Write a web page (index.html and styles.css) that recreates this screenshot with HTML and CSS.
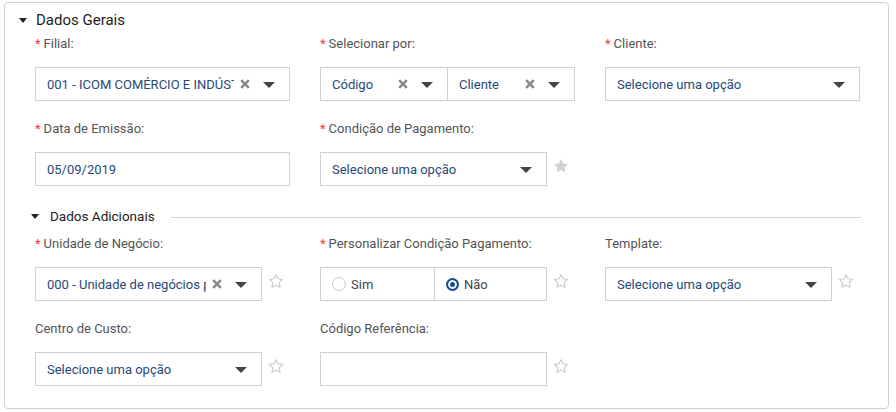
FILE: index.html
```html
<!DOCTYPE html>
<html lang="pt">
<head>
<meta charset="utf-8">
<link rel="stylesheet" href="styles.css">
</head>
<body>
<div class="panel">
  <div class="section-head">
    <svg class="tri" width="8" height="5" viewBox="0 0 8 5"><path d="M0 0h8L4 5z" fill="#222"/></svg>
    <span>Dados Gerais</span>
  </div>

  <div class="grid">
    <div class="field">
      <label class="lbl"><span class="req">*</span>Filial:</label>
      <div class="box select">
        <span class="val">001 - ICOM COMÉRCIO E INDÚSTRIA LTDA</span>
        <svg class="x" width="10" height="10" viewBox="0 0 10 10"><path d="M1.2 1.2L8.8 8.8M8.8 1.2L1.2 8.8" stroke="#8a8a8a" stroke-width="2.6"/></svg>
        <svg class="caret" width="12" height="6" viewBox="0 0 12 6"><path d="M0 0h12L6 6z" fill="#444"/></svg>
      </div>
    </div>
    <div class="field">
      <label class="lbl"><span class="req">*</span>Selecionar por:</label>
      <div class="split">
        <div class="box select half">
          <span class="val">Código</span>
          <svg class="x" width="10" height="10" viewBox="0 0 10 10"><path d="M1.2 1.2L8.8 8.8M8.8 1.2L1.2 8.8" stroke="#8a8a8a" stroke-width="2.6"/></svg>
          <svg class="caret" width="12" height="6" viewBox="0 0 12 6"><path d="M0 0h12L6 6z" fill="#444"/></svg>
        </div>
        <div class="box select half">
          <span class="val">Cliente</span>
          <svg class="x" width="10" height="10" viewBox="0 0 10 10"><path d="M1.2 1.2L8.8 8.8M8.8 1.2L1.2 8.8" stroke="#8a8a8a" stroke-width="2.6"/></svg>
          <svg class="caret" width="12" height="6" viewBox="0 0 12 6"><path d="M0 0h12L6 6z" fill="#444"/></svg>
        </div>
      </div>
    </div>
    <div class="field">
      <label class="lbl"><span class="req">*</span>Cliente:</label>
      <div class="box select">
        <span class="val">Selecione uma opção</span>
        <svg class="caret" width="12" height="6" viewBox="0 0 12 6"><path d="M0 0h12L6 6z" fill="#444"/></svg>
      </div>
    </div>

    <div class="field">
      <label class="lbl"><span class="req">*</span>Data de Emissão:</label>
      <div class="box input"><span class="val">05/09/2019</span></div>
    </div>
    <div class="field">
      <label class="lbl"><span class="req">*</span>Condição de Pagamento:</label>
      <div class="ctrl">
        <div class="box select narrow">
          <span class="val">Selecione uma opção</span>
          <svg class="caret" width="12" height="6" viewBox="0 0 12 6"><path d="M0 0h12L6 6z" fill="#444"/></svg>
        </div>
        <svg class="star" width="16" height="16" viewBox="0 0 24 24"><path d="M12 1.5l3.2 6.6 7.2 1-5.2 5.1 1.3 7.2L12 18l-6.5 3.4 1.3-7.2L1.6 9.1l7.2-1z" fill="#cfd2d6"/></svg>
      </div>
    </div>
  </div>

  <div class="sub-head">
    <svg class="tri" width="8" height="5" viewBox="0 0 8 5"><path d="M0 0h8L4 5z" fill="#222"/></svg>
    <span class="sub-title">Dados Adicionais</span>
    <span class="rule"></span>
  </div>

  <div class="grid">
    <div class="field">
      <label class="lbl"><span class="req">*</span>Unidade de Negócio:</label>
      <div class="ctrl">
        <div class="box select narrow">
          <span class="val">000 - Unidade de negócios padrão</span>
          <svg class="x" width="10" height="10" viewBox="0 0 10 10"><path d="M1.2 1.2L8.8 8.8M8.8 1.2L1.2 8.8" stroke="#8a8a8a" stroke-width="2.6"/></svg>
          <svg class="caret" width="12" height="6" viewBox="0 0 12 6"><path d="M0 0h12L6 6z" fill="#444"/></svg>
        </div>
        <svg class="star" width="16" height="16" viewBox="0 0 24 24"><path d="M12 2.5l3 6.2 6.8 1-4.9 4.8 1.2 6.8L12 18l-6.1 3.3 1.2-6.8-4.9-4.8 6.8-1z" fill="none" stroke="#c5c9ce" stroke-width="1.6" stroke-linejoin="round"/></svg>
      </div>
    </div>
    <div class="field">
      <label class="lbl"><span class="req">*</span>Personalizar Condição Pagamento:</label>
      <div class="ctrl">
        <div class="radios">
          <div class="box radio-opt"><span class="radio"></span><span class="rtext">Sim</span></div>
          <div class="box radio-opt"><span class="radio on"></span><span class="rtext">Não</span></div>
        </div>
        <svg class="star" width="16" height="16" viewBox="0 0 24 24"><path d="M12 2.5l3 6.2 6.8 1-4.9 4.8 1.2 6.8L12 18l-6.1 3.3 1.2-6.8-4.9-4.8 6.8-1z" fill="none" stroke="#c5c9ce" stroke-width="1.6" stroke-linejoin="round"/></svg>
      </div>
    </div>
    <div class="field">
      <label class="lbl">Template:</label>
      <div class="ctrl">
        <div class="box select narrow">
          <span class="val">Selecione uma opção</span>
          <svg class="caret" width="12" height="6" viewBox="0 0 12 6"><path d="M0 0h12L6 6z" fill="#444"/></svg>
        </div>
        <svg class="star" width="16" height="16" viewBox="0 0 24 24"><path d="M12 2.5l3 6.2 6.8 1-4.9 4.8 1.2 6.8L12 18l-6.1 3.3 1.2-6.8-4.9-4.8 6.8-1z" fill="none" stroke="#c5c9ce" stroke-width="1.6" stroke-linejoin="round"/></svg>
      </div>
    </div>

    <div class="field">
      <label class="lbl">Centro de Custo:</label>
      <div class="ctrl">
        <div class="box select narrow">
          <span class="val">Selecione uma opção</span>
          <svg class="caret" width="12" height="6" viewBox="0 0 12 6"><path d="M0 0h12L6 6z" fill="#444"/></svg>
        </div>
        <svg class="star" width="16" height="16" viewBox="0 0 24 24"><path d="M12 2.5l3 6.2 6.8 1-4.9 4.8 1.2 6.8L12 18l-6.1 3.3 1.2-6.8-4.9-4.8 6.8-1z" fill="none" stroke="#c5c9ce" stroke-width="1.6" stroke-linejoin="round"/></svg>
      </div>
    </div>
    <div class="field">
      <label class="lbl">Código Referência:</label>
      <div class="ctrl">
        <div class="box input narrow"></div>
        <svg class="star" width="16" height="16" viewBox="0 0 24 24"><path d="M12 2.5l3 6.2 6.8 1-4.9 4.8 1.2 6.8L12 18l-6.1 3.3 1.2-6.8-4.9-4.8 6.8-1z" fill="none" stroke="#c5c9ce" stroke-width="1.6" stroke-linejoin="round"/></svg>
      </div>
    </div>
  </div>
</div>
</body>
</html>
```

FILE: styles.css
```css
* { box-sizing: border-box; }

html, body {
  margin: 0;
  padding: 0;
  background: #fff;
}

body {
  font-family: Roboto, "Liberation Sans", Arial, sans-serif;
  font-size: 13px;
  color: #555;
}

.panel {
  margin: 2px 0 0 4px;
  width: 885px;
  height: 407px;
  border: 1px solid #cfd1d4;
  border-radius: 4px;
  padding: 6px 0 0 14px;
}

.section-head {
  display: flex;
  align-items: center;
  height: 22px;
  color: #222;
  font-size: 15px;
}

.section-head .tri {
  margin-right: 9px;
  margin-top: 1px;
}

.grid {
  display: grid;
  grid-template-columns: 255px 255px 255px;
  column-gap: 30px;
  row-gap: 20px;
  padding-left: 16px;
}

.section-head + .grid {
  margin-top: 5px;
}

.field {
  display: flex;
  flex-direction: column;
}

.lbl {
  display: block;
  height: 16px;
  line-height: 16px;
  margin-bottom: 15px;
  color: #545454;
  font-size: 13px;
}

.req {
  color: #ee3b3b;
  margin-right: 3px;
}

.box {
  height: 34px;
  border: 1px solid #ced1d8;
  background: #fff;
  display: flex;
  align-items: center;
}

.select, .input {
  padding: 0 14px 0 11px;
}

.val {
  flex: 1;
  min-width: 0;
  overflow: hidden;
  white-space: nowrap;
  text-overflow: clip;
  color: #27497a;
  font-size: 13px;
}

.x {
  flex: none;
  margin: 0 13px 0 6px;
}

.caret {
  flex: none;
  margin-top: 1px;
}

.split {
  display: flex;
}

.split .half {
  width: 128px;
  padding-right: 14px;
}

.split .half + .half {
  margin-left: -1px;
}

.ctrl {
  display: flex;
  align-items: flex-start;
}

.narrow {
  width: 227px;
  flex: none;
}

.star {
  flex: none;
  margin: 6px 0 0 6px;
}

.sub-head {
  display: flex;
  align-items: center;
  height: 16px;
  margin: 22px 14px 12px 0;
  padding-left: 12px;
}

.sub-head .tri {
  margin-right: 11px;
}

.sub-title {
  color: #222;
  font-size: 13.5px;
  margin-right: 16px;
}

.rule {
  flex: 1;
  height: 1px;
  background: #cfd1d4;
  margin-top: 3px;
  margin-right: 13px;
}

.radios {
  display: flex;
  width: 227px;
  flex: none;
}

.radio-opt {
  width: 115px;
  padding-left: 11px;
}

.radio-opt + .radio-opt {
  margin-left: -1px;
  width: 113px;
}

.radio {
  width: 14px;
  height: 14px;
  border-radius: 50%;
  border: 1px solid #c8c8c8;
  background: #fff;
  flex: none;
  margin-right: 5px;
}

.radio.on {
  width: 13px;
  height: 13px;
  border: 2px solid #134d91;
  background: #134d91;
  box-shadow: inset 0 0 0 2px #fff;
}

.rtext {
  color: #444;
  font-size: 13px;
}
```
